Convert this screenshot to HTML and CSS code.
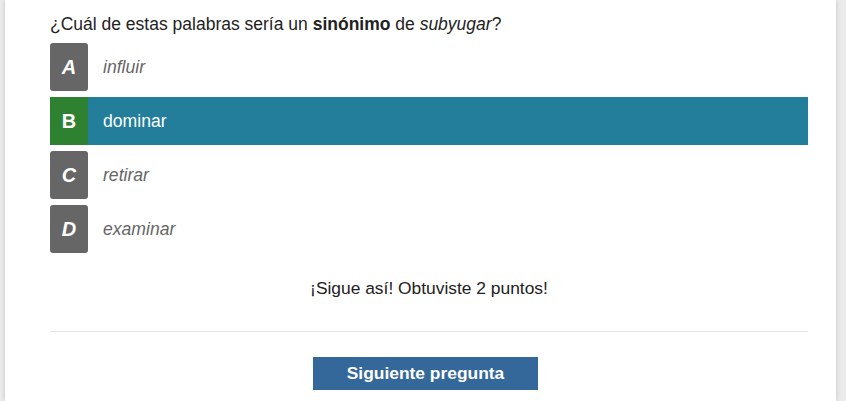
FILE: index.html
```html
<!DOCTYPE html>
<html lang="es">
<head>
<meta charset="utf-8">
<link rel="stylesheet" href="styles.css">
</head>
<body>
<div class="card">
  <p class="question">¿Cuál de estas palabras sería un <b>sinónimo</b> de <i>subyugar</i>?</p>
  <ul class="options">
    <li class="option"><span class="letter">A</span><span class="text">influir</span></li>
    <li class="option correct"><span class="letter">B</span><span class="text">dominar</span></li>
    <li class="option"><span class="letter">C</span><span class="text">retirar</span></li>
    <li class="option"><span class="letter">D</span><span class="text">examinar</span></li>
  </ul>
  <p class="feedback">¡Sigue así! Obtuviste 2 puntos!</p>
  <hr class="divider">
  <div class="actions"><button class="next">Siguiente pregunta</button></div>
</div>
</body>
</html>
```
FILE: styles.css
```css
html, body { margin: 0; padding: 0; }
body {
  background: #ececec;
  font-family: "Liberation Sans", Arial, sans-serif;
  height: 401px;
  overflow: hidden;
}
.card {
  background: #fff;
  margin-left: 5px;
  width: 831px;
  height: 401px;
  box-sizing: border-box;
  padding: 14px 28px 0 45px;
  box-shadow: 0 0 5px rgba(0,0,0,0.18);
}
.question {
  margin: 0;
  font-size: 17.5px;
  line-height: 20px;
  color: #222;
}
.options {
  list-style: none;
  margin: 9px 0 0;
  padding: 0;
  display: flex;
  flex-direction: column;
  gap: 6px;
}
.option {
  display: flex;
  align-items: center;
  height: 48px;
}
.letter {
  width: 38px;
  height: 48px;
  border-radius: 3px;
  background: #666;
  color: #fff;
  font-weight: bold;
  font-style: italic;
  font-size: 20px;
  display: flex;
  align-items: center;
  justify-content: center;
}
.text {
  padding-left: 15px;
  font-size: 17.6px;
  font-style: italic;
  color: #666;
}
.option.correct { background: #227e9a; }
.option.correct .letter {
  background: #2e8131;
  border-radius: 0;
  font-style: normal;
}
.option.correct .text { color: #fff; font-style: normal; }
.feedback {
  margin: 25px 0 0;
  text-align: center;
  font-size: 17.4px;
  line-height: 20px;
  color: #222;
}
.divider {
  margin: 33px 0 0;
  border: 0;
  border-top: 1px solid #e6e6e6;
}
.actions {
  display: flex;
  justify-content: center;
  padding-top: 25px;
  padding-right: 7px;
}
.next {
  width: 225px;
  height: 33px;
  border: 0;
  background: #34679a;
  color: #fff;
  font-family: "Liberation Sans", Arial, sans-serif;
  font-weight: bold;
  font-size: 17.4px;
  padding: 0;
}
```
